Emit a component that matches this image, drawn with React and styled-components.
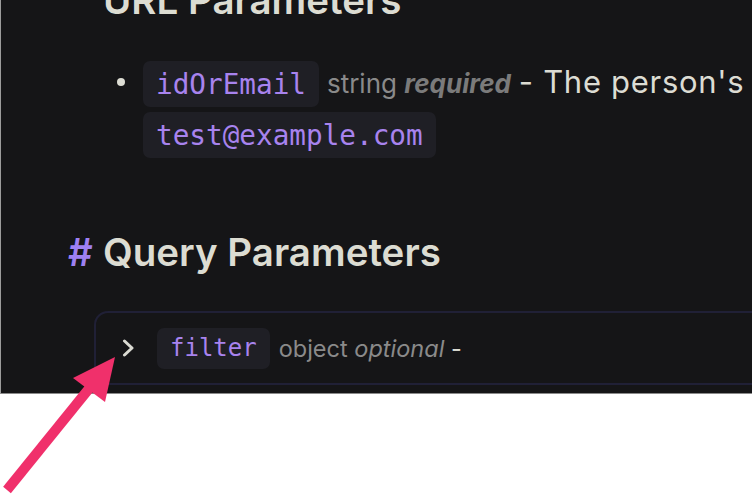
import React from "react";
import styled, { createGlobalStyle } from "styled-components";

const Global = createGlobalStyle`
  html, body { margin: 0; padding: 0; background: #ffffff; }
  body { font-family: Inter, "Noto Sans", sans-serif; }
`;

const Page = styled.div`
  position: relative;
  width: 752px;
  height: 496px;
  overflow: hidden;
`;

const Panel = styled.div`
  height: 394px;
  background: #151517;
  border-left: 1px solid #9c9c9c;
  border-bottom: 1px solid #8a8a8a;
  overflow: hidden;
  box-sizing: border-box;
`;

const Content = styled.div`
  width: 1100px;
  padding-left: 102px;
  color: #dcdcd3;
`;

const Heading = styled.h2`
  margin: ${(p) => p.$mt}px 0 0 0;
  font-size: 38.5px;
  line-height: 44px;
  font-weight: 600;
  color: #dcdcd2;
`;

const Hash = styled.span`
  display: inline-block;
  width: 35px;
  margin-left: -35px;
  color: #9e80f2;
`;

const List = styled.ul`
  list-style: none;
  margin: 35px 0 0 0;
  padding: 0;
`;

const Item = styled.li`
  position: relative;
  padding-left: 40px;
  font-size: 28px;
  line-height: 50px;
  &::before {
    content: "";
    position: absolute;
    left: 14px;
    top: 21px;
    width: 8px;
    height: 8px;
    border-radius: 50%;
    background: #dcdcd3;
  }
`;

const Code = styled.code`
  font-family: "DejaVu Sans Mono", monospace;
  font-size: ${(p) => p.$size}px;
  color: #a883ee;
  background: #1f1f25;
  border-radius: 7px;
  padding: 6.5px 13px 6.5px 13px;
`;

const Type = styled.span`
  font-size: ${(p) => p.$size}px;
  color: #8a8a8a;
`;

const Flag = styled.em`
  font-style: italic;
  font-weight: ${(p) => (p.$bold ? 700 : 400)};
  color: ${(p) => (p.$bold ? "#7b7b7b" : "#8a8a8a")};
`;

const Desc = styled.span`
  font-size: 31px;
  letter-spacing: 0.7px;
  color: #dcdcd3;
`;

const Card = styled.div`
  margin: 37px 0 0 -9px;
  width: 900px;
  height: 74px;
  box-sizing: border-box;
  border: 2px solid #202036;
  border-radius: 14px;
  display: flex;
  align-items: center;
  padding-left: 26px;
`;

const Chevron = styled.svg`
  width: 13px;
  height: 18px;
  flex: none;
  margin-right: 22px;
`;

const Meta = styled.span`
  margin-left: 9px;
  font-size: 23.5px;
  color: #8a8a8a;
`;

const Dash = styled.span`
  color: #dcdcd3;
`;

const Arrow = styled.svg`
  position: absolute;
  left: 0;
  top: 0;
  width: 752px;
  height: 496px;
  pointer-events: none;
`;

export default function App() {
  return (
    <Page>
      <Global />
      <Panel>
        <Content>
          <Heading $mt={-22}>URL Parameters</Heading>
          <List>
            <Item>
              <Code $size={27.7}>idOrEmail</Code>{" "}
              <Type $size={26}>
                string <Flag $bold>required</Flag>
              </Type>{" "}
              <Desc>- The person's ID or email, e.g.</Desc>{" "}
              <Code $size={27.7}>test@example.com</Code>
            </Item>
          </List>
          <Heading $mt={70}>
            <Hash>#</Hash>Query Parameters
          </Heading>
          <Card>
            <Chevron viewBox="0 0 13 18">
              <polyline
                points="2.5,2 10,9 2.5,16"
                fill="none"
                stroke="#dadad2"
                strokeWidth="3"
                strokeLinecap="round"
                strokeLinejoin="round"
              />
            </Chevron>
            <Code $size={24}>filter</Code>
            <Meta>
              object <Flag>optional</Flag> <Dash>-</Dash>
            </Meta>
          </Card>
        </Content>
      </Panel>
      <Arrow viewBox="0 0 752 496">
        <line x1="7" y1="490" x2="92" y2="385" stroke="#f0306b" strokeWidth="10" />
        <polygon points="115,357 73,378 105,402" fill="#f0306b" />
      </Arrow>
    </Page>
  );
}
